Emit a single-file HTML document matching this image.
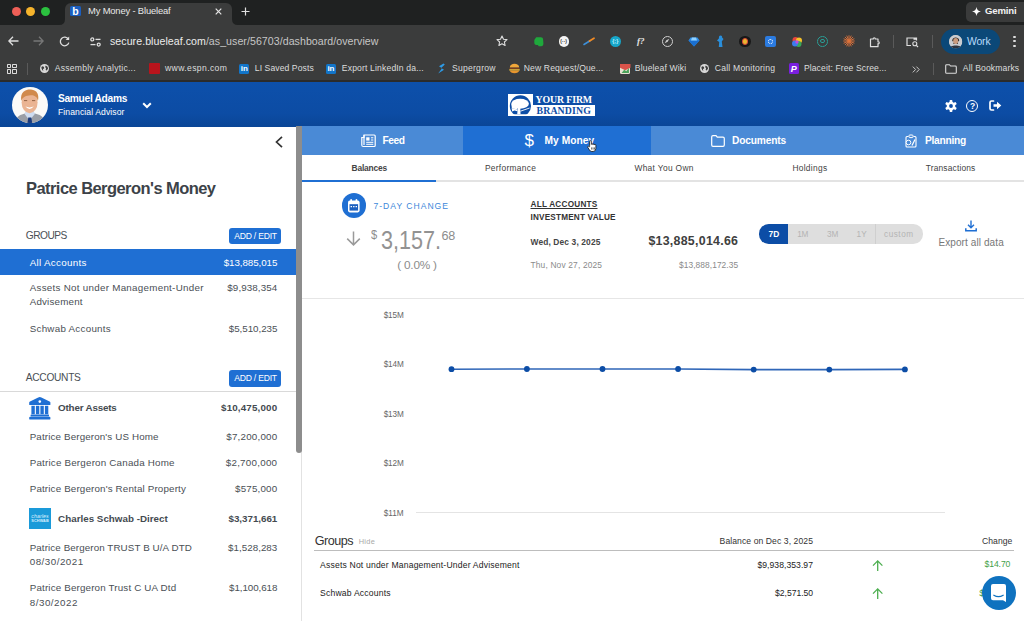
<!DOCTYPE html>
<html lang="en">
<head>
<meta charset="utf-8">
<title>My Money - Blueleaf</title>
<style>
*{box-sizing:border-box;margin:0;padding:0}
html,body{width:1024px;height:621px;overflow:hidden;background:#fff}
body{font-family:"Liberation Sans",sans-serif;position:relative;color:#333}
.a{position:absolute;white-space:nowrap}
svg{position:absolute;overflow:visible}
</style>
</head>
<body>
<div class="a" style="left:0px;top:0px;width:1024px;height:25px;background:#1f2121;"></div>
<div class="a" style="left:0px;top:25px;width:1024px;height:56px;background:#3b3c3c;"></div>
<div class="a" style="left:0px;top:80px;width:1024px;height:2px;background:#2b2b2b;"></div>
<div class="a" style="left:11.5px;top:6.5px;width:9px;height:9px;background:#ee5f57;border-radius:50%"></div>
<div class="a" style="left:26px;top:6.5px;width:9px;height:9px;background:#f6b42c;border-radius:50%"></div>
<div class="a" style="left:40.5px;top:6.5px;width:9px;height:9px;background:#2bc13f;border-radius:50%"></div>
<div class="a" style="left:65px;top:3px;width:167px;height:22px;background:#3b3c3c;border-radius:6px 6px 0 0"></div>
<svg style="left:59px;top:19px" width="6" height="6" viewBox="0 0 6 6"><path d="M6 0 V6 H0 Q6 6 6 0 z" fill="#3b3c3c"/></svg>
<svg style="left:232px;top:19px" width="6" height="6" viewBox="0 0 6 6"><path d="M0 0 V6 H6 Q0 6 0 0 z" fill="#3b3c3c"/></svg>
<div class="a" style="left:70px;top:5.5px;width:10.5px;height:10.5px;background:#1b5fc0;border-radius:1.5px"></div>
<div class="a" style="left:72.3px;top:3.5px;font-size:10.5px;line-height:14px;color:#fff;font-weight:bold;">b</div>
<div class="a" style="left:88px;top:5.0px;font-size:9.4px;line-height:12px;color:#e8e8e8;letter-spacing:-0.155px;">My Money - Blueleaf</div>
<svg style="left:214.5px;top:7.5px" width="7" height="7" viewBox="0 0 7 7"><path d="M.7.7l5.6 5.6M6.3.7L.7 6.3" stroke="#e6e6e6" stroke-width="1.2" fill="none"/></svg>
<svg style="left:241px;top:6.5px" width="9" height="9" viewBox="0 0 9 9"><path d="M4.5.5v8M.5 4.5h8" stroke="#e0e0e0" stroke-width="1.2" fill="none"/></svg>
<div class="a" style="left:966px;top:2px;width:62px;height:19.5px;background:#3a3b3b;border-radius:5px"></div>
<svg style="left:972px;top:6.5px" width="9" height="9" viewBox="0 0 10 10"><path d="M5 0C5.4 3 7 4.6 10 5C7 5.4 5.4 7 5 10C4.6 7 3 5.4 0 5C3 4.6 4.6 3 5 0z" fill="#fff"/></svg>
<div class="a" style="left:985px;top:5.2px;font-size:9.6px;line-height:12px;color:#f2f2f2;font-weight:bold;letter-spacing:-0.172px;">Gemini</div>
<svg style="left:8px;top:36px" width="11" height="10" viewBox="0 0 11 10"><path d="M5 0.8 L0.9 5 L5 9.2 M0.9 5 H10.5" stroke="#dedede" stroke-width="1.3" fill="none"/></svg>
<svg style="left:33px;top:36px" width="11" height="10" viewBox="0 0 11 10"><path d="M6 0.8 L10.1 5 L6 9.2 M10.1 5 H0.5" stroke="#777" stroke-width="1.3" fill="none"/></svg>
<svg style="left:59px;top:35.5px" width="11" height="11" viewBox="0 0 11 11"><path d="M9.3 3.2 A4.3 4.3 0 1 0 9.8 6.6" stroke="#dedede" stroke-width="1.3" fill="none"/><path d="M6.6 3.9 H10.2 V0.4 z" fill="#dedede"/></svg>
<svg style="left:90px;top:36.5px" width="11" height="10" viewBox="0 0 11 10"><g stroke="#dedede" stroke-width="1.3" fill="none"><circle cx="2.3" cy="2.4" r="1.5"/><path d="M5.5 2.4 h5"/><circle cx="8.7" cy="7.6" r="1.5"/><path d="M0.5 7.6 h5"/></g></svg>
<div class="a" style="left:110px;top:34.4px;font-size:10.6px;line-height:14px;color:#ececec;letter-spacing:0.056px;">secure.blueleaf.com<span style="color:#c6c6c6">/as_user/56703/dashboard/overview</span></div>
<svg style="left:496px;top:35px" width="12" height="12" viewBox="0 0 12 12"><path d="M6 1 L7.5 4.2 L11 4.6 L8.4 7 L9.1 10.5 L6 8.8 L2.9 10.5 L3.6 7 L1 4.6 L4.5 4.2 z" stroke="#dedede" stroke-width="1.1" fill="none" stroke-linejoin="round"/></svg>
<svg style="left:532.5px;top:35.5px" width="12" height="12" viewBox="0 0 12 12"><path d="M3.2 1.2h4.6c1.5 0 2.2.9 2.3 2.3l.3 4.1c.1 1.6-.8 2.7-2.3 2.7H6.4c-.9 0-1.3-.5-1.3-1.3H3.4C2 9 1.3 8 1.3 6.6V3.9z" fill="#1fa83c"/></svg>
<div class="a" style="left:558.7px;top:36.0px;width:10.6px;height:10.6px;background:#f4f4f4;border-radius:50%;"></div>
<div class="a" style="left:560.3px;top:38.3px;font-size:5px;line-height:6px;color:#333;font-weight:bold;">(··)</div>
<svg style="left:583px;top:37px" width="12" height="9" viewBox="0 0 12 9"><path d="M1 7.5L7 3.8" stroke="#3d8fd8" stroke-width="1.6" stroke-linecap="round"/><path d="M6.5 4L11 1.3" stroke="#f08a24" stroke-width="1.8" stroke-linecap="round"/></svg>
<div class="a" style="left:609.9px;top:35.5px;width:11.6px;height:11.6px;background:#16a6c9;border-radius:50%;"></div>
<div class="a" style="left:612.2px;top:37.8px;font-size:5.5px;line-height:7px;color:#bdf0ff;font-weight:bold;">{;}</div>
<div class="a" style="left:637px;top:35.3px;font-size:9px;line-height:12px;color:#e6e6e6;font-weight:bold;font-family:'Liberation Serif',serif;font-style:italic;">f?</div>
<div class="a" style="left:661.8px;top:35.8px;width:11.0px;height:11.0px;background:transparent;border-radius:50%;border:1.2px solid #cfcfcf"></div>
<svg style="left:664.3px;top:38.3px" width="6" height="6" viewBox="0 0 6 6"><path d="M5.3.7L3.7 3.7.7 5.3 2.3 2.3z" fill="#cfcfcf"/></svg>
<svg style="left:687.5px;top:36.5px" width="12" height="10" viewBox="0 0 12 10"><path d="M2.5.5h7L11.5 3.4 6 9.5.5 3.4z" fill="#2f8fe8"/><path d="M.5 3.4h11L6 9.5z" fill="#1a6fd0"/><path d="M4 .5h4l1 2.9H3z" fill="#8fd0ff"/></svg>
<svg style="left:714.5px;top:35px" width="10" height="13" viewBox="0 0 10 13"><path d="M5.5.5c1.2 0 1.8.9 1.6 1.9L8.5 4 6.8 6.5l.7 5.5H3.8L4.2 7 2 5.5 4 3.2C3.7 1.7 4.3.5 5.5.5z" fill="#2a8fdc"/></svg>
<div class="a" style="left:739.4px;top:35.7px;width:11.2px;height:11.2px;background:#181818;border-radius:50%;"></div>
<div class="a" style="left:741.6px;top:37.9px;width:6.8px;height:6.8px;background:#e8b830;border-radius:50%;border:1.3px solid #d9463a"></div>
<div class="a" style="left:764.7px;top:35.8px;width:11px;height:11px;background:#2b7be0;border-radius:2px"></div>
<div class="a" style="left:767.5px;top:38.6px;width:5.4px;height:5.4px;background:transparent;border-radius:50%;border:1.5px dotted #fff"></div>
<svg style="left:790.5px;top:35.5px" width="12" height="12" viewBox="0 0 12 12"><circle cx="4.5" cy="4" r="3" fill="#e8453c"/><circle cx="8" cy="4.5" r="3" fill="#f6c12a"/><circle cx="7.5" cy="8" r="3" fill="#3aa757"/><circle cx="4" cy="7.5" r="3" fill="#3b7ded"/><circle cx="6" cy="6" r="1.7" fill="#c04be0"/></svg>
<div class="a" style="left:817.0px;top:35.9px;width:10.8px;height:10.8px;background:transparent;border-radius:50%;border:1.6px solid #2a9d95"></div>
<div class="a" style="left:820.2px;top:39.1px;width:4.4px;height:4.4px;background:transparent;border-radius:50%;border:1.2px solid #2a9d95"></div>
<svg style="left:842.5px;top:35.3px" width="12" height="12" viewBox="0 0 12 12"><g stroke="#e0733a" stroke-width="0.9" stroke-linecap="round"><path d="M6 .7v10.6M.7 6h10.6M2.2 2.2l7.6 7.6M9.8 2.2L2.2 9.8M3.9 1l4.2 10M1 3.9l10 4.2M8.1 1L3.9 11M11 3.9L1 8.1"/></g></svg>
<svg style="left:868.5px;top:35.5px" width="12" height="12" viewBox="0 0 12 12"><path d="M1.5 3h2.8c-.5-1.6 2.4-1.6 1.9 0H9v2.8c1.6-.5 1.6 2.4 0 1.9v3H1.5z" stroke="#dedede" stroke-width="1.2" fill="none" stroke-linejoin="round"/></svg>
<div class="a" style="left:893px;top:35px;width:1px;height:13px;background:#5a5a5a;"></div>
<svg style="left:906px;top:35.5px" width="13" height="12" viewBox="0 0 13 12"><path d="M5 9.5H1V2h9.5v2.5" stroke="#dedede" stroke-width="1.2" fill="none"/><circle cx="8.8" cy="7.8" r="2" stroke="#dedede" stroke-width="1.1" fill="none"/><path d="M10.3 9.3l1.7 1.7" stroke="#dedede" stroke-width="1.2"/><path d="M7.5 2h3v1.8h-3z" fill="#dedede"/></svg>
<div class="a" style="left:931.5px;top:35px;width:1px;height:13px;background:#5a5a5a;"></div>
<div class="a" style="left:941px;top:29px;width:58.5px;height:25px;background:#0b4878;border-radius:12.5px"></div>
<div class="a" style="left:949.0px;top:34.6px;width:13.4px;height:13.4px;background:#d9c3b0;border-radius:50%;"></div>
<svg style="left:949px;top:34.6px" width="13.4" height="13.4" viewBox="0 0 14 14"><defs><clipPath id="wk"><circle cx="7" cy="7" r="7"/></clipPath></defs><g clip-path="url(#wk)"><rect width="14" height="14" fill="#c9ccd0"/><path d="M3.5 5.5C3.5 1.5 10.5 1.5 10.5 5.5V6.5H3.5z" fill="#2a2320"/><ellipse cx="7" cy="6.3" rx="2.6" ry="3.2" fill="#c99a7c"/><path d="M4.6 7.5C5 10 9 10 9.4 7.5V9.5H4.6z" fill="#3a2e28"/><path d="M0 14C1 10 13 10 14 14z" fill="#2f3540"/></g></svg>
<div class="a" style="left:967px;top:34.5px;font-size:10.4px;line-height:14px;color:#b9dcfb;letter-spacing:-0.141px;">Work</div>
<div class="a" style="left:1013.4px;top:35.7px;width:2.2px;height:2.2px;background:#dedede;border-radius:50%;"></div>
<div class="a" style="left:1013.4px;top:40.2px;width:2.2px;height:2.2px;background:#dedede;border-radius:50%;"></div>
<div class="a" style="left:1013.4px;top:44.7px;width:2.2px;height:2.2px;background:#dedede;border-radius:50%;"></div>
<div class="a" style="left:6.6px;top:63.6px;width:4.4px;height:4.4px;background:transparent;border:1.1px solid #dcdcdc;border-radius:0.8px"></div>
<div class="a" style="left:6.6px;top:69.2px;width:4.4px;height:4.4px;background:transparent;border:1.1px solid #dcdcdc;border-radius:0.8px"></div>
<div class="a" style="left:12.2px;top:63.6px;width:4.4px;height:4.4px;background:transparent;border:1.1px solid #dcdcdc;border-radius:0.8px"></div>
<div class="a" style="left:12.2px;top:69.2px;width:4.4px;height:4.4px;background:transparent;border:1.1px solid #dcdcdc;border-radius:0.8px"></div>
<div class="a" style="left:27px;top:63px;width:1px;height:12px;background:#5a5a5a;"></div>
<div class="a" style="left:39.8px;top:64.0px;width:9.2px;height:9.2px;background:#d8d8d8;border-radius:50%;"></div>
<svg style="left:39.8px;top:63.99999999999999px" width="9.2" height="9.2" viewBox="0 0 10 10"><path d="M2.2 2.4 L4.2 3 L4.6 4.6 L3.2 5.6 L3.6 7.6 L2.4 6.6 L1.4 4.2 z M6.2 1.6 L8.2 3 L8.8 5 L7.4 7.2 L6.2 6.4 L6.6 4.6 L5.6 3.4 z" fill="#3b3c3c"/></svg>
<div class="a" style="left:54.8px;top:63.1px;font-size:8.6px;line-height:11px;color:#dcdcdc;letter-spacing:0.229px;">Assembly Analytic...</div>
<div class="a" style="left:149.4px;top:63.4px;width:10.6px;height:10.6px;background:#b8141c;border-radius:1px"></div>
<div class="a" style="left:165px;top:63.1px;font-size:8.6px;line-height:11px;color:#dcdcdc;letter-spacing:0.375px;">www.espn.com</div>
<div class="a" style="left:239.3px;top:63.599999999999994px;width:10px;height:10px;background:#1275c9;border-radius:1.5px"></div>
<div class="a" style="left:240.70000000000002px;top:63.8px;font-size:8px;line-height:10px;color:#fff;font-weight:bold;">in</div>
<div class="a" style="left:254.8px;top:63.1px;font-size:8.6px;line-height:11px;color:#dcdcdc;letter-spacing:0.085px;">LI Saved Posts</div>
<div class="a" style="left:326px;top:63.599999999999994px;width:10px;height:10px;background:#1275c9;border-radius:1.5px"></div>
<div class="a" style="left:327.4px;top:63.8px;font-size:8px;line-height:10px;color:#fff;font-weight:bold;">in</div>
<div class="a" style="left:341.8px;top:63.1px;font-size:8.6px;line-height:11px;color:#dcdcdc;letter-spacing:0.151px;">Export LinkedIn da...</div>
<svg style="left:437px;top:63px" width="9" height="11" viewBox="0 0 9 11"><path d="M6.5 0.5 L2 3.2 L5 5.2 L1.2 10.5 L7 6.8 L4.2 5 L7.8 1.6 z" fill="#2e9be6"/></svg>
<div class="a" style="left:452px;top:63.1px;font-size:8.6px;line-height:11px;color:#dcdcdc;letter-spacing:0.238px;">Supergrow</div>
<svg style="left:508.5px;top:63px" width="11" height="11" viewBox="0 0 11 11"><path d="M0.8 4.6 C0.8 -0.4 10.2 -0.4 10.2 4.6 z" fill="#f0a73a"/><rect x="0.5" y="4.8" width="10" height="1.6" fill="#7a3b1c"/><rect x="0.3" y="6.3" width="10.4" height="1.2" fill="#f6d03c"/><path d="M0.8 7.6 H10.2 C10.2 11 0.8 11 0.8 7.6 z" fill="#e8962e"/></svg>
<div class="a" style="left:523.8px;top:63.1px;font-size:8.6px;line-height:11px;color:#dcdcdc;letter-spacing:0.117px;">New Request/Que...</div>
<div class="a" style="left:619.5px;top:63.5px;width:10.5px;height:10.5px;background:#e9e2d2;border-radius:1.5px"></div>
<svg style="left:619.5px;top:63.5px" width="10.5" height="10.5" viewBox="0 0 10 10"><path d="M0 0 H10 V3.5 L5 6 L0 3.5 z" fill="#d9534a"/><path d="M1.5 8.5 L4 5.5 L6 7 L8.5 3.8 V8.5 z" fill="#4aa35a"/></svg>
<div class="a" style="left:634.8px;top:63.1px;font-size:8.6px;line-height:11px;color:#dcdcdc;letter-spacing:0.141px;">Blueleaf Wiki</div>
<div class="a" style="left:700.0px;top:64.0px;width:9.2px;height:9.2px;background:#d8d8d8;border-radius:50%;"></div>
<svg style="left:700.0px;top:63.99999999999999px" width="9.2" height="9.2" viewBox="0 0 10 10"><path d="M2.2 2.4 L4.2 3 L4.6 4.6 L3.2 5.6 L3.6 7.6 L2.4 6.6 L1.4 4.2 z M6.2 1.6 L8.2 3 L8.8 5 L7.4 7.2 L6.2 6.4 L6.6 4.6 L5.6 3.4 z" fill="#3b3c3c"/></svg>
<div class="a" style="left:714.8px;top:63.1px;font-size:8.6px;line-height:11px;color:#dcdcdc;letter-spacing:0.205px;">Call Monitoring</div>
<div class="a" style="left:788.5px;top:63.3px;width:10.5px;height:10.8px;background:#7a1fe0;border-radius:1.5px"></div>
<div class="a" style="left:790.8px;top:62.7px;font-size:9px;line-height:12px;color:#fff;font-weight:bold;font-style:italic;">P</div>
<div class="a" style="left:803.9px;top:63.1px;font-size:8.6px;line-height:11px;color:#dcdcdc;letter-spacing:0.102px;">Placeit: Free Scree...</div>
<svg style="left:912px;top:65.5px" width="8" height="7" viewBox="0 0 8 7"><path d="M0.8 0.6 L3.6 3.5 L0.8 6.4 M4.4 0.6 L7.2 3.5 L4.4 6.4" stroke="#c8c8c8" stroke-width="1" fill="none"/></svg>
<div class="a" style="left:932.5px;top:63px;width:1px;height:12px;background:#5a5a5a;"></div>
<svg style="left:945px;top:64px" width="12" height="10" viewBox="0 0 12 10"><path d="M0.7 1.6 Q0.7 0.7 1.6 0.7 H4.4 L5.6 2 H10.4 Q11.3 2 11.3 2.9 V8.4 Q11.3 9.3 10.4 9.3 H1.6 Q0.7 9.3 0.7 8.4 z" stroke="#dcdcdc" stroke-width="1.1" fill="none"/></svg>
<div class="a" style="left:962.8px;top:63.1px;font-size:8.6px;line-height:11px;color:#dcdcdc;letter-spacing:0.114px;">All Bookmarks</div>
<div class="a" style="left:0px;top:82px;width:1024px;height:44.6px;background:#0c4da6;background:linear-gradient(#0d50ab,#0c4ca4 70%,#0a4596)"></div>
<svg style="left:11.5px;top:86.7px" width="36" height="36" viewBox="0 0 36 36"><defs><clipPath id="av"><circle cx="18" cy="18" r="18"/></clipPath></defs><g clip-path="url(#av)"><rect width="36" height="36" fill="#fbfaf8"/><path d="M3 36 C4 29 9 27.6 13 26.6 L23 26.6 C27 27.6 32 29 33 36 z" fill="#9a9ea6"/><path d="M12.6 27 L17.6 33.5 L22.8 27 L21.6 23 H14 z" fill="#cfdcf0"/><path d="M16.3 30.6 H19.3 L20.2 36 H15.4 z" fill="#1b3a7c"/><ellipse cx="17.6" cy="15.6" rx="8" ry="10.6" fill="#eab493"/><path d="M9.3 14 C7.6 4 15 2.2 19 2.6 C25.4 3 27.4 8.6 25.9 14 C25.3 10.4 23 7.8 18.6 8.2 C14 8.4 10.6 10 9.3 14 z" fill="#d18a4c"/><path d="M13.4 19.6 Q17.6 24.4 21.8 19.6 Q17.6 21.2 13.4 19.6 z" fill="#fff"/><path d="M12 13.6 h3.2 M20 13.6 h3.2" stroke="#8a5a3c" stroke-width="0.9"/></g></svg>
<div class="a" style="left:58px;top:92.3px;font-size:10.2px;line-height:13px;color:#fff;font-weight:bold;letter-spacing:-0.306px;">Samuel Adams</div>
<div class="a" style="left:58px;top:107.1px;font-size:8.6px;line-height:11px;color:#fff;letter-spacing:0.09px;">Financial Advisor</div>
<svg style="left:141.5px;top:101.5px" width="10" height="7" viewBox="0 0 10 7"><path d="M1.2 1.2 L5 5 L8.8 1.2" stroke="#fff" stroke-width="2" fill="none"/></svg>
<div class="a" style="left:508.4px;top:93.6px;width:24.5px;height:22px;background:#fff;"></div>
<div class="a" style="left:532.9px;top:104.8px;width:61.8px;height:10.8px;background:#fff;"></div>
<svg style="left:508.4px;top:93.6px" width="24.5" height="22" viewBox="0 0 24.5 22"><defs><clipPath id="lg"><rect width="24.5" height="20.2"/></clipPath></defs><g clip-path="url(#lg)"><circle cx="12.4" cy="11.9" r="10.6" fill="#0c4da6"/><ellipse cx="12.1" cy="9.7" rx="8.8" ry="5" fill="#fff"/><path d="M3.4 10 L3.8 14.5 L9 15.2 L9.6 13 z" fill="#fff"/><path d="M9.8 12.5 H12.2 L12.6 21 H9.2 z" fill="#fff"/><path d="M3.6 14.2 L9.6 15.6 L9.4 17.2 L6.5 16.6 L4.2 17.4 z" fill="#fff"/><path d="M12.4 17.2 L21.6 14" stroke="#fff" stroke-width="0.9"/></g></svg>
<div class="a" style="left:535.5px;top:92.7px;font-size:9.8px;line-height:13px;color:#fff;font-weight:bold;font-family:'Liberation Serif',serif;letter-spacing:-0.102px;">YOUR FIRM</div>
<div class="a" style="left:536.5px;top:103.8px;font-size:9.8px;line-height:13px;color:#0c4da6;font-weight:bold;font-family:'Liberation Serif',serif;letter-spacing:0.145px;">BRANDING</div>
<svg style="left:944.5px;top:99.8px" width="12" height="12" viewBox="0 0 12 12"><g fill="#fff"><circle cx="6" cy="6" r="4.3"/><g id="gt"><rect x="4.6" y="0" width="2.8" height="12" rx="0.8"/></g><use href="#gt" transform="rotate(60 6 6)"/><use href="#gt" transform="rotate(120 6 6)"/></g><circle cx="6" cy="6" r="1.9" fill="#0c4da6"/></svg>
<div class="a" style="left:966.2px;top:99.7px;width:12.2px;height:12.2px;background:transparent;border-radius:50%;border:1.3px solid #fff"></div>
<div class="a" style="left:969.9px;top:100.5px;font-size:8.5px;line-height:11px;color:#fff;font-weight:bold;">?</div>
<svg style="left:988.5px;top:100px" width="13" height="11" viewBox="0 0 13 11"><path d="M4.5 1 H2.5 Q1 1 1 2.5 V8.5 Q1 10 2.5 10 H4.5" stroke="#fff" stroke-width="1.7" fill="none" stroke-linecap="round"/><path d="M4.5 4.3 H8 V1.8 L12.3 5.5 L8 9.2 V6.7 H4.5 z" fill="#fff"/></svg>
<div class="a" style="left:301.8px;top:126.2px;width:722.2px;height:28.6px;background:#4a8ad6;"></div>
<div class="a" style="left:463.3px;top:126.2px;width:188.2px;height:28.6px;background:#1f6fd3;"></div>
<svg style="left:360.5px;top:134px" width="15" height="13.5" viewBox="0 0 15 13.5"><path d="M3 1 H13.2 Q14.2 1 14.2 2 V11.5 Q14.2 12.5 13.2 12.5 H2.3 Q0.8 12.5 0.8 11 V3.5 H3 z" stroke="#fff" stroke-width="1.2" fill="none"/><path d="M3 1 V11" stroke="#fff" stroke-width="1.2"/><rect x="5.2" y="3.3" width="3.3" height="3.3" fill="#fff"/><path d="M10 3.8 H12.3 M10 6 H12.3 M5.2 8.3 H12.3 M5.2 10.3 H12.3" stroke="#fff" stroke-width="1"/></svg>
<div class="a" style="left:382.4px;top:134.2px;font-size:10.2px;line-height:13px;color:#fff;font-weight:bold;letter-spacing:-0.37px;">Feed</div>
<div class="a" style="left:524.6px;top:129.5px;font-size:17px;line-height:22px;color:#fff;font-family:'Liberation Sans',sans-serif;font-weight:normal;">$</div>
<div class="a" style="left:544.6px;top:134.2px;font-size:10.2px;line-height:13px;color:#fff;font-weight:bold;letter-spacing:0.031px;">My Money</div>
<svg style="left:710.5px;top:134.5px" width="14" height="12" viewBox="0 0 14 12"><path d="M0.7 2 Q0.7 0.7 2 0.7 H5 L6.3 2.2 H12 Q13.3 2.2 13.3 3.5 V10 Q13.3 11.3 12 11.3 H2 Q0.7 11.3 0.7 10 z" stroke="#fff" stroke-width="1.2" fill="none"/></svg>
<div class="a" style="left:732px;top:134.2px;font-size:10.2px;line-height:13px;color:#fff;font-weight:bold;letter-spacing:-0.165px;">Documents</div>
<svg style="left:904px;top:133.5px" width="14" height="14" viewBox="0 0 14 14"><path d="M4.5 2.5 H3 Q2 2.5 2 3.5 V12 Q2 13 3 13 H11 Q12 13 12 12 V3.5 Q12 2.5 11 2.5 H9.5" stroke="#fff" stroke-width="1.1" fill="none"/><rect x="5" y="1" width="4" height="2.6" rx="0.8" stroke="#fff" stroke-width="1" fill="none"/><circle cx="4.5" cy="8.5" r="2.3" stroke="#fff" stroke-width="1" fill="#4a8ad6"/><path d="M11 5.5 L8 11.5" stroke="#fff" stroke-width="1.2"/></svg>
<div class="a" style="left:925px;top:134.2px;font-size:10.2px;line-height:13px;color:#fff;font-weight:bold;letter-spacing:-0.252px;">Planning</div>
<svg style="left:587px;top:140.2px" width="9.6" height="12.2" viewBox="0 0 11 14"><path d="M3 7.5 V1.8 Q3 0.8 4 0.8 Q5 0.8 5 1.8 V5 Q5 4.3 5.9 4.3 Q6.8 4.3 6.8 5.3 Q6.8 4.7 7.7 4.7 Q8.6 4.7 8.6 5.7 Q8.6 5.2 9.4 5.2 Q10.2 5.2 10.2 6.2 V9.5 Q10.2 13.2 7 13.2 H5.5 Q3.8 13.2 2.8 11.5 L0.8 8.3 Q0.5 7.5 1.2 7.2 Q2 7 2.5 7.8 z" fill="#fff" stroke="#111" stroke-width="0.9"/><path d="M5.3 8.5 V11 M7 8.5 V11 M8.6 8.5 V11" stroke="#111" stroke-width="0.7"/></svg>
<div class="a" style="left:301px;top:155px;width:1.2px;height:466px;background:#e2e2e2;"></div>
<div class="a" style="left:295.9px;top:126.2px;width:5.9px;height:326.8px;background:#8d8d8d;border-radius:0 0 3px 3px"></div>
<svg style="left:275.4px;top:136px" width="8" height="12" viewBox="0 0 8 12"><path d="M7 0.8 L1.5 6 L7 11.2" stroke="#333" stroke-width="1.7" fill="none"/></svg>
<div class="a" style="left:26px;top:177.8px;font-size:16.5px;line-height:21px;color:#3c4248;font-weight:bold;letter-spacing:-0.559px;">Patrice Bergeron's Money</div>
<div class="a" style="left:25.8px;top:228.5px;font-size:10.2px;line-height:13px;color:#4a4f55;letter-spacing:-0.526px;">GROUPS</div>
<div class="a" style="left:229.3px;top:227.8px;width:52px;height:16.4px;background:#1f6fd3;border-radius:3px"></div>
<div class="a" style="left:234.3px;top:230.7px;font-size:8.6px;line-height:11px;color:#fff;letter-spacing:-0.239px;">ADD / EDIT</div>
<div class="a" style="left:0px;top:249px;width:295.9px;height:25.5px;background:#1f6fd3;"></div>
<div class="a" style="left:29.7px;top:255.5px;font-size:9.8px;line-height:13px;color:#fff;letter-spacing:0.302px;">All Accounts</div>
<div class="a" style="right:746.7px;top:255.5px;font-size:9.8px;line-height:13px;color:#fff;letter-spacing:-0.08px;">$13,885,015</div>
<div class="a" style="left:29.7px;top:281.2px;font-size:9.8px;line-height:13px;color:#4a4f55;letter-spacing:0.273px;">Assets Not under Management-Under</div>
<div class="a" style="right:746.7px;top:281.2px;font-size:9.8px;line-height:13px;color:#4a4f55;letter-spacing:0.095px;">$9,938,354</div>
<div class="a" style="left:29.7px;top:295.4px;font-size:9.8px;line-height:13px;color:#4a4f55;letter-spacing:0.181px;">Advisement</div>
<div class="a" style="left:29.7px;top:321.5px;font-size:9.8px;line-height:13px;color:#4a4f55;letter-spacing:0.264px;">Schwab Accounts</div>
<div class="a" style="right:746.7px;top:321.5px;font-size:9.8px;line-height:13px;color:#4a4f55;letter-spacing:-0.055px;">$5,510,235</div>
<div class="a" style="left:25.8px;top:370.8px;font-size:10.2px;line-height:13px;color:#4a4f55;letter-spacing:-0.296px;">ACCOUNTS</div>
<div class="a" style="left:229.3px;top:370.2px;width:52px;height:16.4px;background:#1f6fd3;border-radius:3px"></div>
<div class="a" style="left:234.3px;top:373.1px;font-size:8.6px;line-height:11px;color:#fff;letter-spacing:-0.239px;">ADD / EDIT</div>
<div class="a" style="left:0px;top:391px;width:295.9px;height:1px;background:#d9d9d9;"></div>
<svg style="left:29.4px;top:396.8px" width="21.6" height="22.6" viewBox="0 0 21.6 22.6"><g fill="#1f6fd3"><path d="M10.8 0 Q11.6 0 12.4 0.4 L20.6 4.4 Q21.4 4.8 21.4 5.6 V7.4 Q21.4 8 20.8 8 H0.8 Q0.2 8 0.2 7.4 V5.6 Q0.2 4.8 1 4.4 L9.2 0.4 Q10 0 10.8 0 z"/><rect x="2.4" y="8.8" width="3.4" height="8.4"/><rect x="6.9" y="8.8" width="3.4" height="8.4"/><rect x="11.4" y="8.8" width="3.4" height="8.4"/><rect x="15.9" y="8.8" width="3.4" height="8.4"/><rect x="1.6" y="17.6" width="18.4" height="1.8" rx="0.4"/><rect x="0.2" y="19.8" width="21.2" height="2.8" rx="0.9"/></g><circle cx="10.8" cy="4.6" r="1.3" fill="#fff"/></svg>
<div class="a" style="left:58.1px;top:401.3px;font-size:9.8px;line-height:13px;color:#444a50;font-weight:bold;letter-spacing:-0.177px;">Other Assets</div>
<div class="a" style="right:746.7px;top:401.3px;font-size:9.8px;line-height:13px;color:#444a50;font-weight:bold;letter-spacing:0.165px;">$10,475,000</div>
<div class="a" style="left:29.7px;top:430.4px;font-size:9.8px;line-height:13px;color:#4a4f55;letter-spacing:0.135px;">Patrice Bergeron's US Home</div>
<div class="a" style="right:746.7px;top:430.4px;font-size:9.8px;line-height:13px;color:#4a4f55;letter-spacing:0.195px;">$7,200,000</div>
<div class="a" style="left:29.7px;top:456.4px;font-size:9.8px;line-height:13px;color:#4a4f55;letter-spacing:0.199px;">Patrice Bergeron Canada Home</div>
<div class="a" style="right:746.7px;top:456.4px;font-size:9.8px;line-height:13px;color:#4a4f55;letter-spacing:0.255px;">$2,700,000</div>
<div class="a" style="left:29.7px;top:482.0px;font-size:9.8px;line-height:13px;color:#4a4f55;letter-spacing:0.154px;">Patrice Bergeron's Rental Property</div>
<div class="a" style="right:746.7px;top:482.0px;font-size:9.8px;line-height:13px;color:#4a4f55;letter-spacing:0.178px;">$575,000</div>
<div class="a" style="left:29.4px;top:507.6px;width:21.7px;height:21.7px;background:#1a9ad9;"></div>
<div class="a" style="left:31.3px;top:512.8px;font-size:5.2px;line-height:7px;color:#d8f0ff;font-style:italic;letter-spacing:0.109px;">charles</div>
<div class="a" style="left:31.3px;top:518.8px;font-size:3.8px;line-height:5px;color:#d8f0ff;font-weight:bold;letter-spacing:0.104px;">SCHWAB</div>
<div class="a" style="left:58.1px;top:512.1px;font-size:9.8px;line-height:13px;color:#444a50;font-weight:bold;letter-spacing:0.012px;">Charles Schwab -Direct</div>
<div class="a" style="right:746.7px;top:512.1px;font-size:9.8px;line-height:13px;color:#444a50;font-weight:bold;letter-spacing:-0.025px;">$3,371,661</div>
<div class="a" style="left:29.7px;top:540.7px;font-size:9.8px;line-height:13px;color:#4a4f55;letter-spacing:0.095px;">Patrice Bergeron TRUST B U/A DTD</div>
<div class="a" style="right:746.7px;top:540.7px;font-size:9.8px;line-height:13px;color:#4a4f55;letter-spacing:0.025px;">$1,528,283</div>
<div class="a" style="left:29.7px;top:555.4px;font-size:9.8px;line-height:13px;color:#4a4f55;letter-spacing:0.495px;">08/30/2021</div>
<div class="a" style="left:29.7px;top:581.4px;font-size:9.8px;line-height:13px;color:#4a4f55;letter-spacing:0.162px;">Patrice Bergeron Trust C UA Dtd</div>
<div class="a" style="right:746.7px;top:581.4px;font-size:9.8px;line-height:13px;color:#4a4f55;letter-spacing:-0.075px;">$1,100,618</div>
<div class="a" style="left:29.7px;top:595.7px;font-size:9.8px;line-height:13px;color:#4a4f55;letter-spacing:0.523px;">8/30/2022</div>
<div class="a" style="left:302px;top:180px;width:722px;height:1.6px;background:#e3e3e3;"></div>
<div class="a" style="left:302px;top:179.5px;width:133.5px;height:2.6px;background:#1f6fd3;"></div>
<div class="a" style="left:351.6px;top:162.5px;font-size:8.4px;line-height:11px;color:#444;font-weight:bold;letter-spacing:-0.173px;">Balances</div>
<div class="a" style="left:484.9px;top:162.5px;font-size:8.4px;line-height:11px;color:#3f3f3f;letter-spacing:0.295px;">Performance</div>
<div class="a" style="left:634.4px;top:162.5px;font-size:8.4px;line-height:11px;color:#3f3f3f;letter-spacing:0.333px;">What You Own</div>
<div class="a" style="left:792.4px;top:162.5px;font-size:8.4px;line-height:11px;color:#3f3f3f;letter-spacing:0.301px;">Holdings</div>
<div class="a" style="left:925.7px;top:162.5px;font-size:8.4px;line-height:11px;color:#3f3f3f;letter-spacing:0.18px;">Transactions</div>
<div class="a" style="left:341.8px;top:193.3px;width:24.6px;height:24.6px;background:#1f6fd3;border-radius:50%;"></div>
<svg style="left:348.3px;top:198.8px" width="11.6" height="13.4" viewBox="0 0 11.6 13.4"><rect x="0" y="1.6" width="11.6" height="11.8" rx="1.8" fill="#fff"/><rect x="1.5" y="5.2" width="8.6" height="6.4" fill="#1a5fc0"/><rect x="2.3" y="0" width="1.7" height="3" rx="0.8" fill="#fff"/><rect x="7.6" y="0" width="1.7" height="3" rx="0.8" fill="#fff"/><path d="M2.6 7.6 h1.4 M5.1 7.6 h1.4 M7.6 7.6 h1.4" stroke="#fff" stroke-width="1.1"/></svg>
<div class="a" style="left:373.5px;top:200.5px;font-size:8.6px;line-height:11px;color:#3d88da;letter-spacing:0.984px;">7-DAY CHANGE</div>
<svg style="left:345.5px;top:231.3px" width="15" height="15" viewBox="0 0 15 15"><path d="M7.5 0.5 V13.6 M1.2 7.6 L7.5 13.9 L13.8 7.6" stroke="#9a9a9a" stroke-width="1.5" fill="none"/></svg>
<div class="a" style="left:370.6px;top:227.4px;font-size:12.6px;line-height:16px;color:#8c8c8c;transform:scaleX(0.8837);transform-origin:left center;">$</div>
<div class="a" style="left:380.6px;top:223.4px;font-size:26.2px;line-height:34px;color:#929292;transform:scaleX(0.824);transform-origin:left center;">3,157.</div>
<div class="a" style="left:441.6px;top:227.6px;font-size:12.6px;line-height:16px;color:#8c8c8c;letter-spacing:-0.408px;">68</div>
<div class="a" style="left:397.2px;top:258.1px;font-size:11.8px;line-height:15px;color:#8c8c8c;letter-spacing:-0.214px;">( 0.0% )</div>
<div class="a" style="left:530.5px;top:199.3px;font-size:8.2px;line-height:11px;color:#333;font-weight:bold;text-decoration:underline;text-underline-offset:1.2px;text-decoration-thickness:0.9px;letter-spacing:0.238px;">ALL ACCOUNTS</div>
<div class="a" style="left:530.5px;top:212.2px;font-size:8.2px;line-height:11px;color:#333;font-weight:bold;letter-spacing:0.188px;">INVESTMENT VALUE</div>
<div class="a" style="left:530.5px;top:237.4px;font-size:8.4px;line-height:11px;color:#444;font-weight:bold;letter-spacing:0.136px;">Wed, Dec 3, 2025</div>
<div class="a" style="left:530.5px;top:259.5px;font-size:8.4px;line-height:11px;color:#8a8a8a;letter-spacing:0.164px;">Thu, Nov 27, 2025</div>
<div class="a" style="right:285.8px;top:233.4px;font-size:12.4px;line-height:16px;color:#404040;font-weight:bold;letter-spacing:0.261px;">$13,885,014.66</div>
<div class="a" style="right:285.8px;top:259.5px;font-size:8.4px;line-height:11px;color:#8a8a8a;letter-spacing:0.07px;">$13,888,172.35</div>
<div class="a" style="left:759.2px;top:224.3px;width:163.8px;height:19.5px;background:#dedede;border-radius:9.75px"></div>
<div class="a" style="left:759.2px;top:224.3px;width:29px;height:19.5px;background:#0c4da6;border-radius:9.75px 0 0 9.75px"></div>
<div class="a" style="left:875px;top:224.3px;width:1px;height:19.5px;background:#cfcfcf;"></div>
<div class="a" style="left:768.6px;top:228.8px;font-size:8.4px;line-height:11px;color:#fff;font-weight:bold;letter-spacing:0.041px;">7D</div>
<div class="a" style="left:797.2px;top:228.8px;font-size:8.2px;line-height:11px;color:#b4b4b4;letter-spacing:-0.188px;">1M</div>
<div class="a" style="left:827px;top:228.8px;font-size:8.2px;line-height:11px;color:#b4b4b4;letter-spacing:0.013px;">3M</div>
<div class="a" style="left:856.5px;top:228.8px;font-size:8.2px;line-height:11px;color:#b4b4b4;letter-spacing:0.092px;">1Y</div>
<div class="a" style="left:884px;top:228.8px;font-size:8.2px;line-height:11px;color:#b4b4b4;letter-spacing:0.535px;">custom</div>
<svg style="left:964.6px;top:220px" width="12" height="12" viewBox="0 0 12 12"><path d="M6 0.6 V7.6 M3 4.8 L6 7.8 L9 4.8" stroke="#1f6fd3" stroke-width="1.4" fill="none"/><path d="M0.8 8.2 V10.8 H11.2 V8.2" stroke="#1f6fd3" stroke-width="1.5" fill="none"/></svg>
<div class="a" style="left:938.4px;top:236.3px;font-size:10px;line-height:13px;color:#777;letter-spacing:0.098px;">Export all data</div>
<div class="a" style="left:302px;top:298px;width:722px;height:1.2px;background:#e6e6e6;"></div>
<div class="a" style="left:383.7px;top:310.0px;font-size:8.2px;line-height:11px;color:#666;letter-spacing:-0.121px;">$15M</div>
<div class="a" style="left:383.7px;top:359.3px;font-size:8.2px;line-height:11px;color:#666;letter-spacing:-0.121px;">$14M</div>
<div class="a" style="left:383.7px;top:408.7px;font-size:8.2px;line-height:11px;color:#666;letter-spacing:-0.121px;">$13M</div>
<div class="a" style="left:383.7px;top:458.1px;font-size:8.2px;line-height:11px;color:#666;letter-spacing:-0.121px;">$12M</div>
<div class="a" style="left:383.7px;top:507.5px;font-size:8.2px;line-height:11px;color:#666;letter-spacing:0.031px;">$11M</div>
<div class="a" style="left:416px;top:512.2px;width:528.5px;height:1px;background:#e4e4e4;"></div>
<svg style="left:0;top:0" width="1024" height="621" viewBox="0 0 1024 621"><path d="M451.5 369.2 L526.9 369 L602.5 369 L678.1 369 L753.7 369.6 L829.3 369.6 L904.9 369.4" stroke="#2f66b8" stroke-width="1.6" fill="none"/><circle cx="451.5" cy="369.2" r="2.9" fill="#0c4da6"/><circle cx="526.9" cy="369" r="2.9" fill="#0c4da6"/><circle cx="602.5" cy="369" r="2.9" fill="#0c4da6"/><circle cx="678.1" cy="369" r="2.9" fill="#0c4da6"/><circle cx="753.7" cy="369.6" r="2.9" fill="#0c4da6"/><circle cx="829.3" cy="369.6" r="2.9" fill="#0c4da6"/><circle cx="904.9" cy="369.4" r="2.9" fill="#0c4da6"/></svg>
<div class="a" style="left:314.8px;top:533.0px;font-size:12.6px;line-height:16px;color:#333;letter-spacing:-0.519px;">Groups</div>
<div class="a" style="left:358.7px;top:537.0px;font-size:7.4px;line-height:10px;color:#a8a8a8;letter-spacing:0.349px;">Hide</div>
<div class="a" style="right:211px;top:536.3px;font-size:8.6px;line-height:11px;color:#333;letter-spacing:0.076px;">Balance on Dec 3, 2025</div>
<div class="a" style="right:11.6px;top:536.3px;font-size:8.6px;line-height:11px;color:#333;letter-spacing:0.048px;">Change</div>
<div class="a" style="left:313.5px;top:550px;width:700.5px;height:1.2px;background:#bdbdbd;"></div>
<div class="a" style="left:320.1px;top:559.8px;font-size:8.6px;line-height:11px;color:#222;letter-spacing:0.178px;">Assets Not under Management-Under Advisement</div>
<div class="a" style="right:211px;top:559.8px;font-size:8.6px;line-height:11px;color:#222;letter-spacing:0.049px;">$9,938,353.97</div>
<div class="a" style="right:13.7px;top:559.2px;font-size:8.6px;line-height:11px;color:#43a047;letter-spacing:-0.083px;">$14.70</div>
<div class="a" style="left:320.1px;top:587.7px;font-size:8.6px;line-height:11px;color:#222;letter-spacing:0.19px;">Schwab Accounts</div>
<div class="a" style="right:211px;top:587.7px;font-size:8.6px;line-height:11px;color:#222;letter-spacing:-0.037px;">$2,571.50</div>
<div class="a" style="right:13.7px;top:587.7px;font-size:8.6px;line-height:11px;color:#43a047;letter-spacing:-0.011px;">$102.87</div>
<svg style="left:872.3px;top:560.0px" width="11.4" height="11.4" viewBox="0 0 11.4 11.4"><path d="M5.7 11 V1.2 M1 5.6 L5.7 0.9 L10.4 5.6" stroke="#4cae4f" stroke-width="1.3" fill="none"/></svg>
<svg style="left:872.3px;top:588.1999999999999px" width="11.4" height="11.4" viewBox="0 0 11.4 11.4"><path d="M5.7 11 V1.2 M1 5.6 L5.7 0.9 L10.4 5.6" stroke="#4cae4f" stroke-width="1.3" fill="none"/></svg>
<div class="a" style="left:981.9px;top:575.9px;width:34px;height:34px;background:#0f72bf;border-radius:50%;"></div>
<svg style="left:991.4px;top:584px" width="15" height="18" viewBox="0 0 15 18"><path d="M2 0 H13 Q15 0 15 2 V18 L12 16.2 H2 Q0 16.2 0 14.2 V2 Q0 0 2 0 z" fill="#fff"/><path d="M2.8 11.2 Q7.5 14.2 12.2 11.2" stroke="#0f72bf" stroke-width="1.2" fill="none" stroke-linecap="round"/></svg>
</body>
</html>
